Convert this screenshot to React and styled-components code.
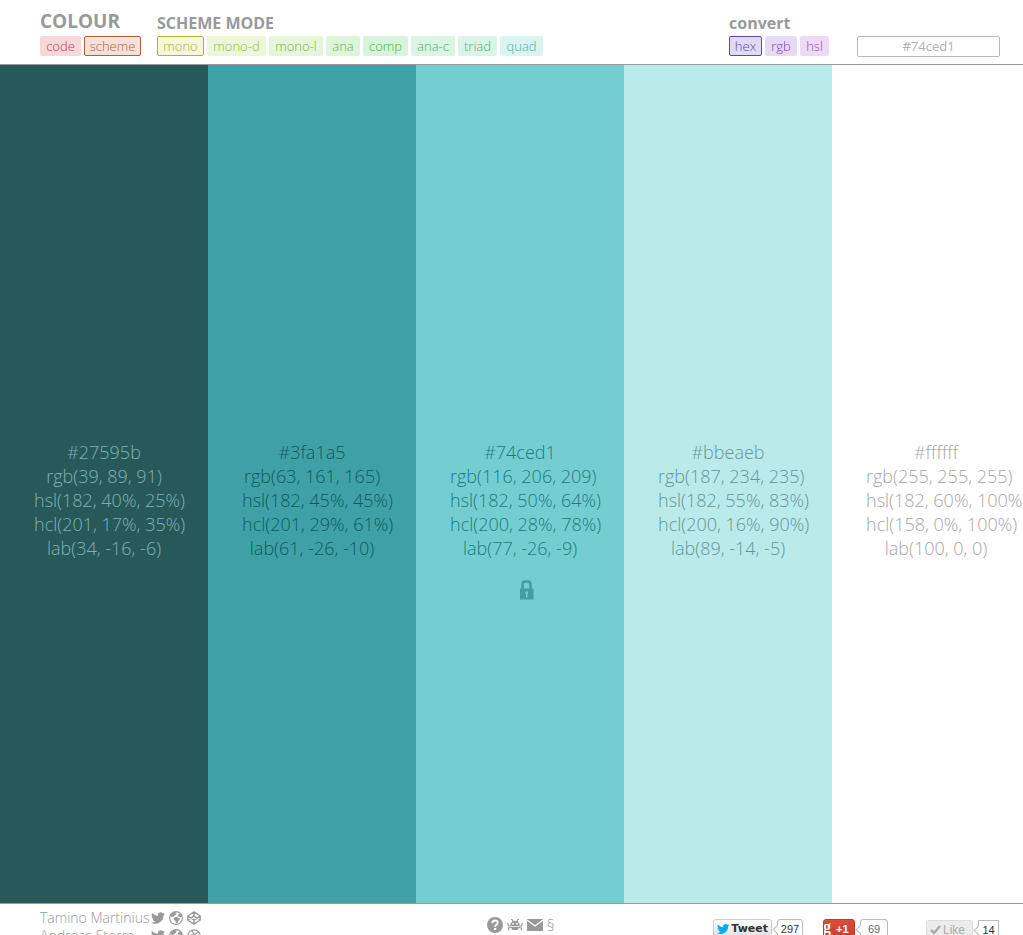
import React, { useState } from 'react';
import styled, { createGlobalStyle } from 'styled-components';
import { FaTwitter } from 'react-icons/fa';

const GlobalStyle = createGlobalStyle`
  * { box-sizing: border-box; }
  body {
    margin: 0;
    background: #fff;
    color: #999;
    font-family: "Open Sans", sans-serif;
    font-weight: 300;
    overflow: hidden;
  }
`;

const Page = styled.div`
  display: flex;
  flex-direction: column;
  height: 100vh;
  overflow: hidden;
`;

const Header = styled.header`
  display: flex;
  align-items: flex-end;
  gap: 16px;
  padding: 8px 23px 8px 40px;
  height: 65px;
  flex: none;
  border-bottom: 1px solid #999;
`;

const Group = styled.section`
  display: flex;
  flex-direction: column;
  margin-left: ${(p) => (p.$end ? 'auto' : '0')};
`;

const Title = styled.h2`
  margin: 0;
  font-size: ${(p) => (p.$large ? '19px' : '16px')};
  line-height: 24px;
  font-weight: 700;
  padding-bottom: ${(p) => (p.$large ? '3px' : '1px')};
`;

const Tags = styled.div`
  display: flex;
  gap: 3px;
`;

const Tag = styled.button`
  font: 300 13px/18px "Open Sans", sans-serif;
  width: ${(p) => p.$width}px;
  height: 20px;
  padding: 0;
  border: 1px solid ${(p) => (p.$active ? p.$ink : 'transparent')};
  border-radius: 2px;
  background-color: ${(p) => p.$fill};
  color: ${(p) => p.$ink};
  text-align: center;
  white-space: nowrap;
  cursor: pointer;
`;

const ColourInput = styled.input`
  width: 143px;
  height: 21px;
  margin: 0 0 -1px 12px;
  padding: 0 0 2px;
  border: 1px solid #b8b8b8;
  border-radius: 2px;
  color: #b0b0b0;
  font: 400 13px/18px "Open Sans", sans-serif;
  text-align: center;
  outline: none;
`;

const Palette = styled.main`
  flex: 1;
  min-height: 0;
  display: grid;
  grid-template-columns: repeat(5, minmax(208px, 1fr));
`;

const Swatch = styled.article`
  display: flex;
  flex-direction: column;
  align-items: center;
  justify-content: center;
  padding-top: 80px;
  background: ${(p) => p.$fill};
  color: ${(p) => p.$ink};
`;

const Values = styled.div`
  width: 140px;
  height: 168px;
  font-size: 18px;
  line-height: 24px;
  text-align: center;
  white-space: nowrap;
`;

const Value = styled.div``;

const LockButton = styled.button`
  display: block;
  margin: 20px auto 0;
  padding: 0 0 0 14px;
  border: 0;
  background: none;
  color: #449da1;
  line-height: 0;
  cursor: pointer;
`;

const Footer = styled.footer`
  display: grid;
  grid-template-columns: 1fr 66px 1fr;
  height: 32px;
  flex: none;
  padding: 0 24px 0 40px;
  border-top: 1px solid #999;
  overflow: hidden;
`;

const People = styled.ul`
  list-style: none;
  margin: 0;
  padding: 5px 0 0;
`;

const Person = styled.li`
  display: flex;
  align-items: center;
  gap: 4px;
  font-size: 14px;
  line-height: 18px;
`;

const PersonName = styled.span`
  width: 107px;
  white-space: nowrap;
`;

const IconLink = styled.a`
  display: flex;
  color: #999;
  text-decoration: none;
`;

const SiteLinks = styled.nav`
  display: flex;
  align-items: center;
  gap: 4px;
  height: 18px;
  margin-top: 12px;
  font-size: 16px;
`;

const Social = styled.div`
  display: flex;
  justify-content: flex-end;
  align-items: flex-start;
  padding-top: 15px;
  font: 400 11px/18px "Liberation Sans", sans-serif;
`;

const Share = styled.div`
  display: flex;
  gap: 5px;
  margin-left: ${(p) => p.$gap};
  margin-top: ${(p) => p.$drop || '0'};
`;

const ShareButton = styled.button`
  display: flex;
  align-items: center;
  gap: ${(p) => p.$gap || '2px'};
  width: ${(p) => p.$width};
  height: 20px;
  padding: 0 3px;
  border: 1px solid ${(p) => p.$edge};
  border-radius: 3px;
  background: ${(p) => p.$fill};
  color: ${(p) => p.$ink};
  font: ${(p) => p.$font};
  white-space: nowrap;
  overflow: hidden;
  cursor: pointer;
`;

const GoogleMark = styled.span`
  margin-left: -4px;
  font: 700 16px/14px "Liberation Serif", serif;
  height: 18px;
`;

const Count = styled.span`
  position: relative;
  width: ${(p) => p.$width};
  height: 20px;
  border: 1px solid #bbb;
  border-radius: ${(p) => p.$radius || '3px'};
  background: #fff;
  color: ${(p) => p.$ink || '#333'};
  text-align: center;

  &::before {
    content: "";
    position: absolute;
    left: -4px;
    top: 6px;
    width: 6px;
    height: 6px;
    background: #fff;
    border-left: 1px solid #bbb;
    border-bottom: 1px solid #bbb;
    transform: rotate(45deg);
  }
`;

const GlobeIcon = () => (
  <svg width="14" height="14" viewBox="0 0 14 14" fill="currentColor">
    <circle cx="7" cy="7" r="6.4" fill="none" stroke="currentColor" strokeWidth="1.1" />
    <path d="M2 3.500 4.500 1.300 7.300 1l.6 1.200-1.200.6.3 1.100-1.500.7-.6 1.200-1.400-.2-.9 1L1.600 5zM9.500 3.200l1.400-1 1.800 2 .3 1.800-1.800.2-1.200-.7-1.500.3.600-1.300zM5.500 6.200l2.200-.3 1.700.9 1.500.5-.5 1.700-1.300 1.200-.6 1.800-1.200.5-.5-2-1.500-1.200-.6-1.700z" />
  </svg>
);

const CodepenIcon = () => (
  <svg width="14" height="14" viewBox="0 0 14 14" fill="none" stroke="currentColor" strokeWidth="1.4" strokeLinejoin="round">
    <path d="M7 .9 13.2 5v4L7 13.1.8 9V5zM.8 5 7 9.2 13.2 5M.8 9 7 4.8 13.2 9M7 .9v3.9M7 9.2v3.9" />
  </svg>
);

const DribbbleIcon = () => (
  <svg width="14" height="14" viewBox="0 0 14 14" fill="none" stroke="currentColor" strokeWidth="1.2">
    <circle cx="7" cy="7" r="6.2" />
    <path d="M4.5 1.4c2 2.5 4 6.500 4.900 11M.9 6.200c4 .2 8-.6 10.300-3.600M2.700 11.500C4.600 7.600 8.500 6.200 13 7.400" />
  </svg>
);

const HelpIcon = () => (
  <svg width="16" height="16" viewBox="0 0 16 16">
    <circle cx="8" cy="8" r="8" fill="currentColor" />
    <path d="M5.300 6.100C5.400 4.300 6.500 3.500 8 3.500s2.700.9 2.700 2.300c0 2-2.500 2-2.500 4" fill="none" stroke="#fff" strokeWidth="1.900" />
    <rect x="7.100" y="11" width="2.100" height="2" fill="#fff" />
  </svg>
);

const BugIcon = () => (
  <svg width="16" height="14" viewBox="0 0 16 14" fill="none" stroke="currentColor" strokeWidth="1.200">
    <path d="M4 1.500h1l1.500 2M12 1.500h-1l-1.500 2M4 8H1.500L.6 5M12 8h2.500l.9-3M4 9.500 1.500 10v2.500M12 9.500l2.500.5v2.500" />
    <path d="M5.500 3h5L13 6.500 11.500 8h-7L3 6.500zM3.800 8.800h8.400L10.800 12H5.200z" fill="currentColor" stroke="none" />
    <path d="M5.300 5h1.600v1.500H5.300zM9.100 5h1.600v1.500H9.100z" fill="#fff" stroke="none" />
  </svg>
);

const MailIcon = () => (
  <svg width="16" height="12" viewBox="0 0 16 12">
    <path d="M0 0h16v12H0z" fill="currentColor" />
    <path d="m0 1 8 6 8-6" fill="none" stroke="#fff" strokeWidth="1.200" />
  </svg>
);

const LockIcon = () => (
  <svg width="14" height="20" viewBox="0 0 14 20">
    <path d="M2.500 9V4.500Q2.500 1.500 5.500 1.500h2q3 0 3 3V9" fill="none" stroke="currentColor" strokeWidth="2.600" />
    <path d="M0 8.500h13.500V19.500H0z" fill="currentColor" />
    <path d="M5.500 11.500h2.500v2.500h-.5v3.500H6V14h-.5z" fill="#74ced1" />
  </svg>
);

const CheckIcon = () => (
  <svg width="11" height="10" viewBox="0 0 11 10" fill="none" stroke="#aaa" strokeWidth="2.400">
    <path d="M1 5.200 4 8l6-7" />
  </svg>
);

const sources = [
  ['code', '#b6404c', '#f6d8da', 41],
  ['scheme', '#b9573f', '#f6e0da', 57],
];
const modes = [
  ['mono', '#b0b232', '#f5f6da', 47],
  ['mono-d', '#97b842', '#eef6da', 59],
  ['mono-l', '#78b440', '#e6f6da', 54],
  ['ana', '#5cb24a', '#dff5da', 34],
  ['comp', '#40b444', '#d8f4da', 45],
  ['ana-c', '#42b26d', '#daf5e1', 44],
  ['triad', '#42b286', '#daf5e8', 39],
  ['quad', '#42b29e', '#daf5ef', 43],
];
const formats = [
  ['hex', '#5f44b2', '#e0daf6', 33],
  ['rgb', '#8442b4', '#e8daf6', 32],
  ['hsl', '#a242b4', '#eedaf5', 29],
];

const swatches = [
  { fill: '#27595b', ink: '#7db2b4', values: ['#27595b', 'rgb(39, 89, 91)', 'hsl(182, 40%, 25%)', 'hcl(201, 17%, 35%)', 'lab(34, -16, -6)'] },
  { fill: '#3fa1a5', ink: '#0b5b5f', values: ['#3fa1a5', 'rgb(63, 161, 165)', 'hsl(182, 45%, 45%)', 'hcl(201, 29%, 61%)', 'lab(61, -26, -10)'] },
  { fill: '#74ced1', ink: '#1c7a7e', values: ['#74ced1', 'rgb(116, 206, 209)', 'hsl(182, 50%, 64%)', 'hcl(200, 28%, 78%)', 'lab(77, -26, -9)'], locked: true },
  { fill: '#bbeaeb', ink: '#659697', values: ['#bbeaeb', 'rgb(187, 234, 235)', 'hsl(182, 55%, 83%)', 'hcl(200, 16%, 90%)', 'lab(89, -14, -5)'] },
  { fill: '#ffffff', ink: '#a6a6a6', values: ['#ffffff', 'rgb(255, 255, 255)', 'hsl(182, 60%, 100%)', 'hcl(158, 0%, 100%)', 'lab(100, 0, 0)'] },
];

function TagList({ items, value, onChange }) {
  return (
    <Tags>
      {items.map(([name, ink, fill, width]) => (
        <Tag
          key={name}
          type="button"
          $ink={ink}
          $fill={fill}
          $width={width}
          $active={name === value}
          aria-pressed={name === value}
          onClick={() => onChange(name)}
        >
          {name}
        </Tag>
      ))}
    </Tags>
  );
}

export default function App() {
  const [source, setSource] = useState('scheme');
  const [mode, setMode] = useState('mono');
  const [format, setFormat] = useState('hex');
  const [colour, setColour] = useState('#74ced1');

  return (
    <Page>
      <GlobalStyle />
      <Header>
        <Group>
          <Title $large>COLOUR</Title>
          <TagList items={sources} value={source} onChange={setSource} />
        </Group>
        <Group>
          <Title>SCHEME MODE</Title>
          <TagList items={modes} value={mode} onChange={setMode} />
        </Group>
        <Group $end>
          <Title>convert</Title>
          <TagList items={formats} value={format} onChange={setFormat} />
        </Group>
        <ColourInput
          aria-label="Colour"
          value={colour}
          onChange={(e) => setColour(e.target.value)}
        />
      </Header>

      <Palette>
        {swatches.map((s) => (
          <Swatch key={s.fill} $fill={s.fill} $ink={s.ink}>
            <Values>
              {s.values.map((v) => (
                <Value key={v}>{v}</Value>
              ))}
              {s.locked && (
                <LockButton type="button" aria-label="Unlock colour">
                  <LockIcon />
                </LockButton>
              )}
            </Values>
          </Swatch>
        ))}
      </Palette>

      <Footer>
        <People>
          <Person>
            <PersonName>Tamino Martinius</PersonName>
            <IconLink href="#twitter" aria-label="Twitter"><FaTwitter size={14} /></IconLink>
            <IconLink href="#web" aria-label="Website"><GlobeIcon /></IconLink>
            <IconLink href="#codepen" aria-label="CodePen"><CodepenIcon /></IconLink>
          </Person>
          <Person>
            <PersonName>Andreas Storm</PersonName>
            <IconLink href="#twitter" aria-label="Twitter"><FaTwitter size={14} /></IconLink>
            <IconLink href="#web" aria-label="Website"><GlobeIcon /></IconLink>
            <IconLink href="#dribbble" aria-label="Dribbble"><DribbbleIcon /></IconLink>
          </Person>
        </People>
        <SiteLinks>
          <IconLink href="#help" aria-label="Help"><HelpIcon /></IconLink>
          <IconLink href="#bugs" aria-label="Report a bug"><BugIcon /></IconLink>
          <IconLink href="#mail" aria-label="Mail"><MailIcon /></IconLink>
          <IconLink href="#legal">§</IconLink>
        </SiteLinks>
        <Social>
          <Share>
            <ShareButton type="button" $width="59px" $edge="#ccc" $fill="linear-gradient(#fff, #dedede)" $ink="#333" $font='700 11px/18px "DejaVu Sans", sans-serif'>
              <FaTwitter size={14} color="#00aced" />
              Tweet
            </ShareButton>
            <Count $width="26px">297</Count>
          </Share>
          <Share $gap="20px">
            <ShareButton type="button" $width="32px" $gap="5px" $edge="#c03a2b" $fill="linear-gradient(#dd4b39, #c93f2d)" $ink="#fff" $font='700 11px/18px "Liberation Sans", sans-serif'>
              <GoogleMark>g</GoogleMark>
              <span>+1</span>
            </ShareButton>
            <Count $width="28px" $ink="#666">69</Count>
          </Share>
          <Share $gap="38px" $drop="1px">
            <ShareButton type="button" $width="47px" $edge="#ddd" $fill="#ececec" $ink="#aaa" $font='400 12px/18px "Liberation Sans", sans-serif'>
              <CheckIcon />
              Like
            </ShareButton>
            <Count $width="21px" $radius="0">14</Count>
          </Share>
        </Social>
      </Footer>
    </Page>
  );
}
